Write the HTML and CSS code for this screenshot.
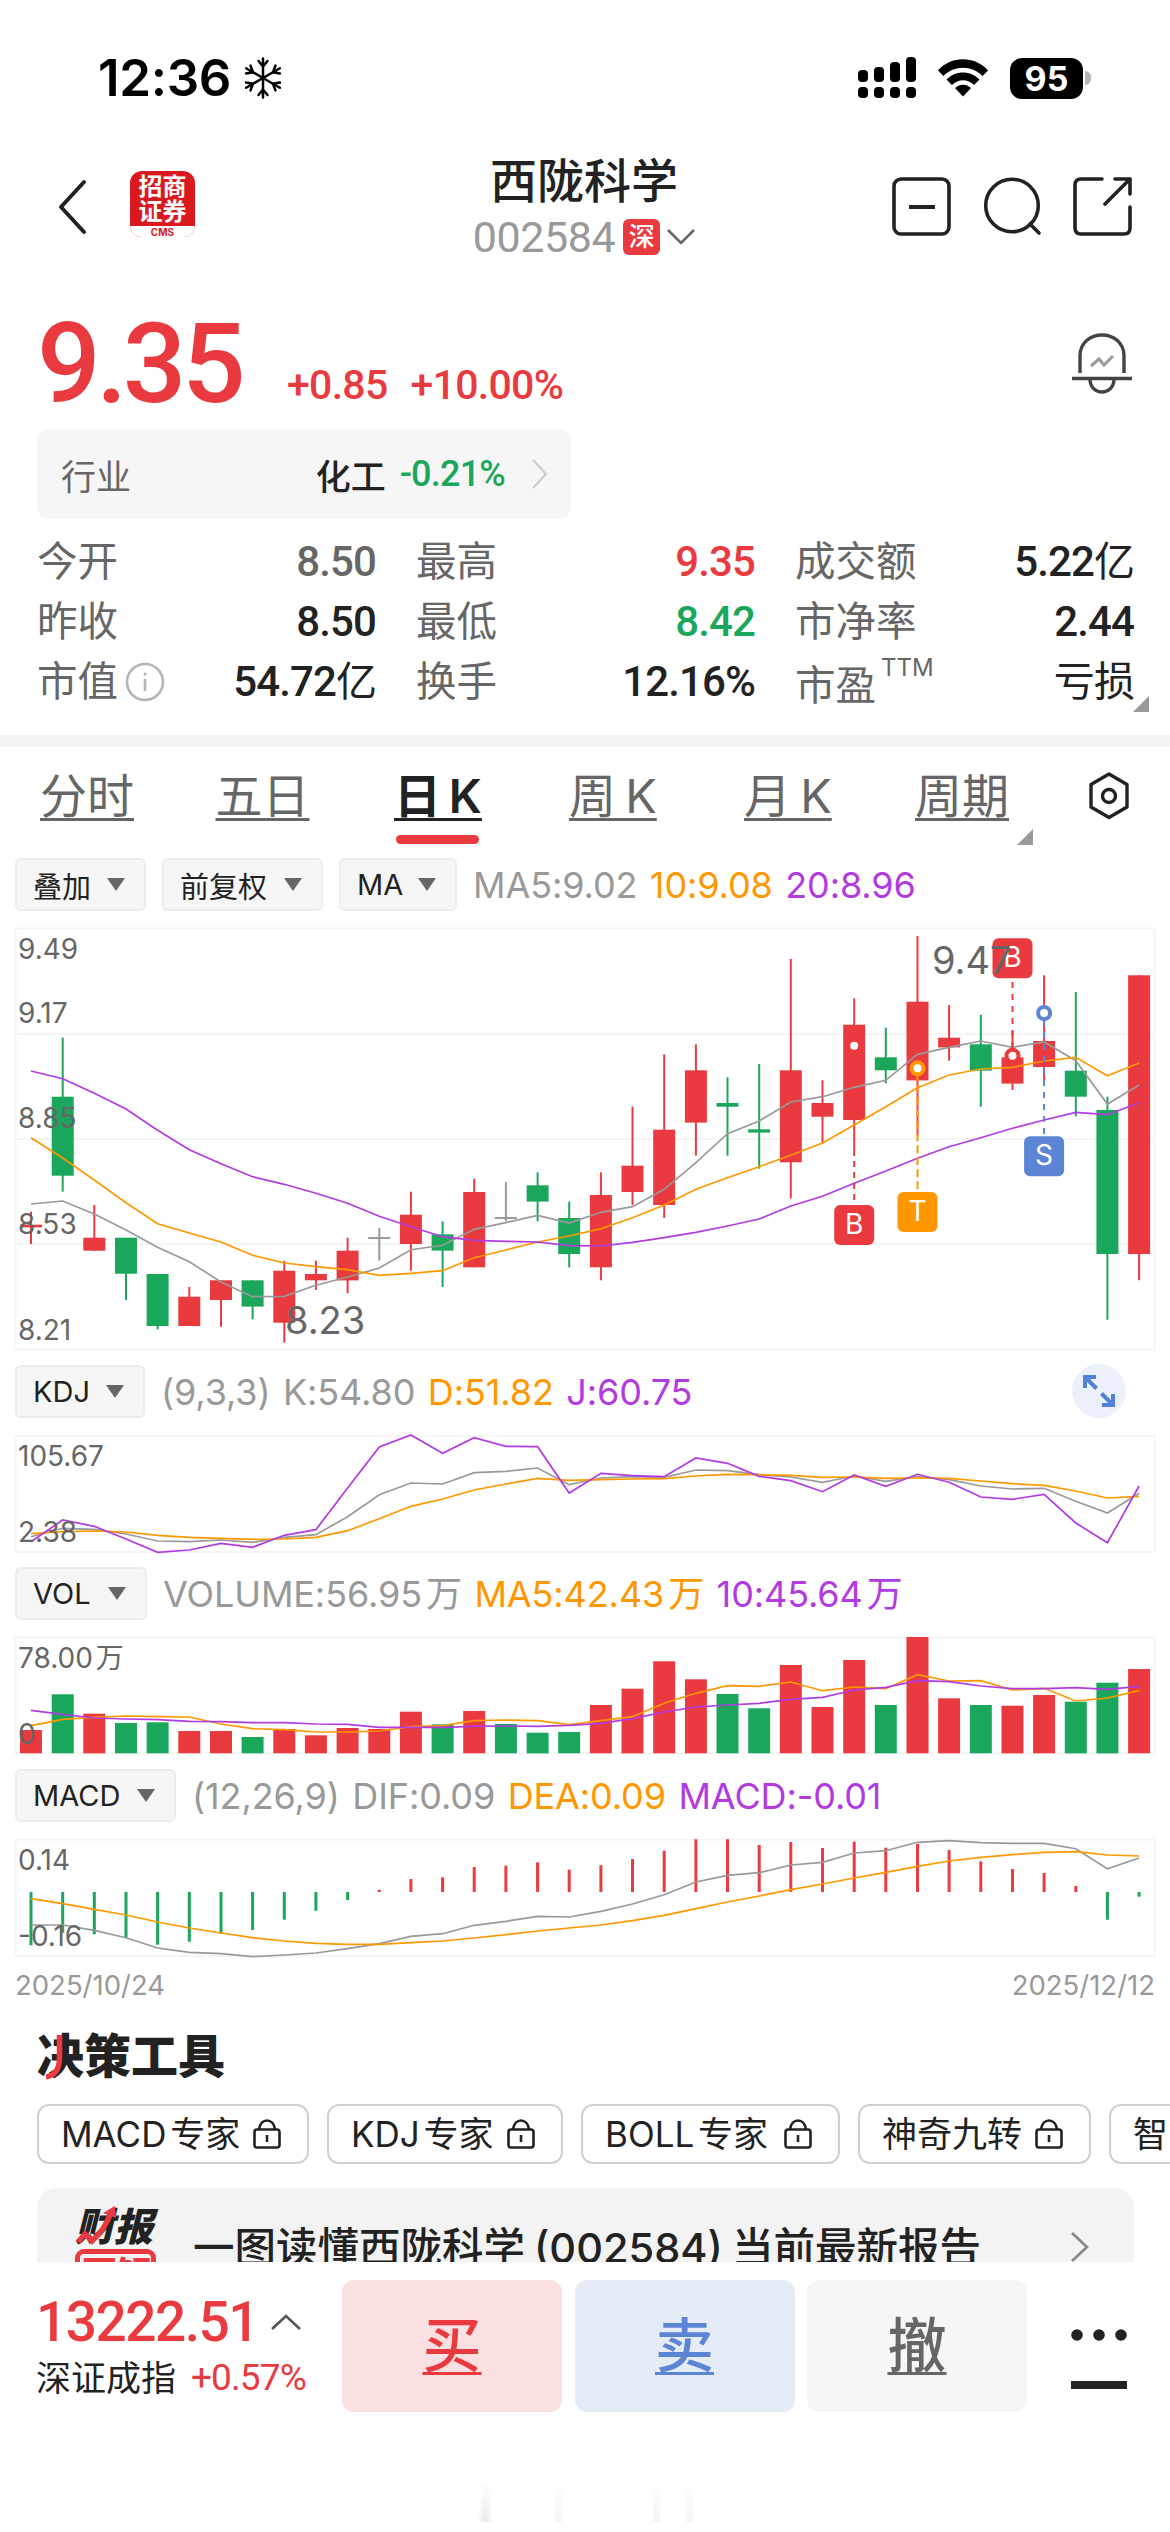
FILE: index.html
```html
<!DOCTYPE html>
<html lang="zh-CN">
<head>
<meta charset="utf-8">
<title>西陇科学 002584</title>
<link rel="stylesheet" href="styles.css">
</head>
<body>
<div class="status">
  <div class="status-left"><span class="clock">12:36</span>
    <svg class="snow" width="38" height="42" viewBox="-19 -21 38 42" fill="none" stroke="#000" stroke-width="2.5" stroke-linecap="round"><g id="arm"><path d="M0 0V-19.5M-4.500 -17L0 -11.500L4.500 -17"/></g><use href="#arm" transform="rotate(60)"/><use href="#arm" transform="rotate(120)"/><use href="#arm" transform="rotate(180)"/><use href="#arm" transform="rotate(240)"/><use href="#arm" transform="rotate(300)"/></svg>
  </div>
  <div class="status-right">
    <svg width="58" height="42" viewBox="0 0 58 42"><rect x="0" y="13" width="10" height="12" rx="4"/><rect x="16" y="10" width="10" height="15" rx="4"/><rect x="32" y="5" width="10" height="20" rx="4"/><rect x="48" y="0" width="10" height="25" rx="4"/><rect x="0" y="30" width="10" height="11" rx="4"/><rect x="16" y="30" width="10" height="11" rx="4"/><rect x="32" y="30" width="10" height="11" rx="4"/><rect x="48" y="30" width="10" height="11" rx="4"/></svg>
    <svg width="50" height="38" viewBox="0 0 50 38"><path d="M0 11.500C13-3.500 37-3.500 50 11.500L44.500 17C34 6 16 6 5.500 17Z"/><path d="M8.500 20.500C17.500 11 32.500 11 41.500 20.500L36 26C30 19.500 20 19.500 14 26Z"/><path d="M17 29C21.500 24.500 28.500 24.500 33 29L25 37.500Z"/></svg>
    <div class="battery"><span class="battery-level">95</span><i class="battery-tip"></i></div>
  </div>
</div>

<header class="header">
  <svg class="back" width="30" height="56" viewBox="0 0 30 56" fill="none" stroke="#222" stroke-width="4" stroke-linecap="round" stroke-linejoin="round"><path d="M26 3L3 28L26 53"/></svg>
  <div class="broker"><span>招商</span><span>证券</span><em>CMS</em></div>
  <div class="stock">
    <h1>西陇科学</h1>
    <div class="stock-code"><span class="din">002584</span><b>深</b><svg width="28" height="16" viewBox="0 0 28 16" fill="none" stroke="#666" stroke-width="2.6"><path d="M1 1L14 14L27 1"/></svg></div>
  </div>
  <div class="actions">
    <svg width="60" height="60" viewBox="0 0 60 60" fill="none" stroke="#222" stroke-width="3.6"><rect x="2" y="2" width="55" height="55" rx="7"/><path d="M17 30H43" stroke-width="4"/></svg>
    <svg width="60" height="60" viewBox="0 0 60 60" fill="none" stroke="#222" stroke-width="3.600" stroke-linecap="round"><circle cx="29" cy="28.500" r="26.300"/><path d="M47 47L56 56"/></svg>
    <svg width="60" height="60" viewBox="0 0 60 60" fill="none" stroke="#222" stroke-width="3.600" stroke-linecap="round" stroke-linejoin="round"><path d="M29 2H8Q2 2 2 8V51Q2 57 8 57H51Q57 57 57 51V30M42 2H57V17M57 2L32 27"/></svg>
  </div>
</header>

<section class="quote">
  <div class="price-row">
    <span class="price din">9.35</span><span class="change din">+0.85</span><span class="change din">+10.00%</span>
    <svg class="bell" width="60" height="62" viewBox="0 0 60 62" fill="none" stroke="#444" stroke-width="3.400"><path d="M8 40V23C8-5 52-5 52 23V40"/><path d="M0 45.500H60M18 47C19 63 41 63 42 47"/><path d="M19 33L27 26L32 32L41 23" stroke="#999" stroke-width="3"/></svg>
  </div>
  <div class="industry"><span class="industry-label">行业</span><span class="industry-name">化工</span><span class="industry-chg din">-0.21%</span><svg width="16" height="30" viewBox="0 0 16 30" fill="none" stroke="#ccc" stroke-width="2"><path d="M1 1L14 15L1 29"/></svg></div>
  <dl class="stats">
    <div><dt>今开</dt><dd class="din flat">8.50</dd></div>
    <div><dt>最高</dt><dd class="din up">9.35</dd></div>
    <div><dt>成交额</dt><dd class="din">5.22<span>亿</span></dd></div>
    <div><dt>昨收</dt><dd class="din">8.50</dd></div>
    <div><dt>最低</dt><dd class="din down">8.42</dd></div>
    <div><dt>市净率</dt><dd class="din">2.44</dd></div>
    <div><dt>市值<svg width="40" height="40" viewBox="0 0 40 40" fill="none" stroke="#b5b5b5" stroke-width="2.600"><circle cx="20" cy="20" r="18"/><path d="M20 17V29M20 10.500V13.500"/></svg></dt><dd class="din">54.72<span>亿</span></dd></div>
    <div><dt>换手</dt><dd class="din">12.16%</dd></div>
    <div><dt class="pe">市盈<sup>TTM</sup></dt><dd class="din"><span>亏损</span></dd></div>
  </dl>
  <i class="corner stats-corner"></i>
</section>

<nav class="tabs">
  <a>分时</a><a>五日</a><a class="active">日 K</a><a>周 K</a><a>月 K</a><a>周期<i class="corner"></i></a>
  <svg width="42" height="48" viewBox="0 0 42 48" fill="none" stroke="#222" stroke-width="3.400" stroke-linejoin="round"><path d="M21 2L39 12.500V35L21 45.500L3 35V12.500Z"/><circle cx="21" cy="24" r="6.500"/></svg>
</nav>

<div class="toolbar tb-main"><button class="w131">叠加<i></i></button><button class="w161">前复权<i></i></button><button class="w118">MA<i></i></button>
  <div class="values v-ma"><span>MA5:9.02</span><span class="o">10:9.08</span><span class="p">20:8.96</span></div></div>
<svg class="chart" id="k" width="1170" height="440" viewBox="0 0 1170 440"></svg>

<div class="toolbar tb-kdj"><button class="w130">KDJ<i></i></button>
  <div class="values v-kdj"><span>(9,3,3)</span><span>K:54.80</span><span class="o">D:51.82</span><span class="p">J:60.75</span></div>
  <div class="expand"><svg width="32" height="32" viewBox="0 0 32 32" fill="none" stroke="#5480d8" stroke-width="4"><path d="M2 13V2H13M2.500 2.500L13.500 13.500M30 19V30H19M29.500 29.500L18.500 18.500"/></svg></div></div>
<svg class="chart" id="kdj" width="1170" height="130" viewBox="0 80 1170 130"></svg>

<div class="toolbar tb-vol"><button class="w132">VOL<i></i></button>
  <div class="values v-vol"><span>VOLUME:56.95 万</span><span class="o">MA5:42.43 万</span><span class="p">10:45.64 万</span></div></div>
<svg class="chart" id="vol" width="1170" height="130" viewBox="0 280 1170 130"></svg>

<div class="toolbar tb-macd"><button class="w161">MACD<i></i></button>
  <div class="values v-macd"><span>(12,26,9)</span><span>DIF:0.09</span><span class="o">DEA:0.09</span><span class="p">MACD:-0.01</span></div></div>
<svg class="chart" id="macd" width="1170" height="130" viewBox="0 70 1170 130"></svg>
<div class="dates"><span>2025/10/24</span><span>2025/12/12</span></div>

<section class="tools">
  <h2><span class="jue">决<svg width="18" height="46" viewBox="0 0 18 46" fill="none" stroke="#e93a3f" stroke-width="5.500"><path d="M13.500 0V22C13.500 34 10 40 0 42"/></svg></span>策工具</h2>
  <div class="chips">
    <span class="c1">MACD 专家<svg><use href="#lock"/></svg></span><span class="c2">KDJ 专家<svg><use href="#lock"/></svg></span><span class="c3">BOLL 专家<svg><use href="#lock"/></svg></span><span class="c4">神奇九转<svg><use href="#lock"/></svg></span><span class="c5">智能</span>
  </div>
  <div class="report">
    <div class="report-logo"><b>财报</b><em>图解</em><svg width="44" height="40" viewBox="0 0 44 40" fill="none" stroke="#e93a3f" stroke-width="5.500"><path d="M3 36L10 28L17 35C25 28 32 18 36 6"/><path d="M28 7L40 0L41 12Z" fill="#e93a3f" stroke="none"/></svg></div>
    <p>一图读懂西陇科学 (002584) 当前最新报告</p>
    <svg class="go" width="18" height="30" viewBox="0 0 18 30" fill="none" stroke="#888" stroke-width="2.600"><path d="M1 1L16 15L1 29"/></svg>
  </div>
</section>

<footer class="trade">
  <div class="trade-row">
    <div class="index">
      <div class="index-value"><span class="din">13222.51</span><svg width="30" height="16" viewBox="0 0 30 16" fill="none" stroke="#555" stroke-width="2.600"><path d="M1 15L15 2L29 15"/></svg></div>
      <div class="index-name">深证成指<span class="din">+0.57%</span></div>
    </div>
    <a class="buy">买</a><a class="sell">卖</a><a class="cancel">撤</a>
    <div class="more"><svg width="56" height="14" viewBox="0 0 56 14" fill="#222"><circle cx="6" cy="7" r="5.800"/><circle cx="28" cy="7" r="5.800"/><circle cx="50" cy="7" r="5.800"/></svg><i></i></div>
  </div>
  <div class="ghost"><i></i><i></i><i></i><i></i></div>
</footer>
<svg class="defs" width="0" height="0"><symbol id="lock" viewBox="0 0 28 30"><path d="M4 10.500H24Q26.500 10.500 26.500 13V26Q26.500 28.500 24 28.500H4Q1.500 28.500 1.500 26V13Q1.500 10.500 4 10.500ZM6 10.500C7.500-1.500 20.500-1.500 22 10.500M14 16V23" fill="none" stroke="#222" stroke-width="2.600"/></symbol></svg>
<script src="script.js"></script>
</body>
</html>
```
FILE: styles.css
```css
* { box-sizing: border-box; }
body { margin: 0; width: 1170px; height: 2532px; overflow: hidden; background: #fff; color: #222; font-family: Inter, "Noto Sans CJK SC", sans-serif; }
svg { display: block; flex: none; }
h1, h2, p, dl, dd { margin: 0; }
em, i { font-style: normal; }
.din { font-family: Roboto, "Noto Sans CJK SC", sans-serif; font-weight: 500; }
.up { color: #e93a3f; }
.down { color: #1aa75c; }
.defs { position: absolute; }

.status { height: 155px; padding: 57px 79px 0 98px; display: flex; justify-content: space-between; color: #000; }
.status-left { display: flex; height: 42px; align-items: center; gap: 13px; }
.clock { font-size: 51px; font-weight: 600; line-height: 42px; letter-spacing: -.3px; width: 133px; white-space: nowrap; }
.status-right { display: flex; height: 42px; align-items: center; gap: 22px; }
.battery { display: flex; align-items: center; gap: 2px; }
.battery-level { width: 73px; height: 41px; border-radius: 12px; background: #000; color: #fff; font-size: 34px; font-weight: 700; line-height: 41px; text-align: center; }
.battery-tip { width: 6px; height: 14px; border-radius: 0 6px 6px 0; background: #b5b5b5; }

.header { height: 145px; padding: 0 37px 0 58px; display: grid; grid-template-columns: 72px 300px 1fr 241px; align-items: start; }
.back { margin-top: 24px; }
.broker { width: 65px; height: 66px; margin-top: 16px; border-radius: 12px; background: #d9191f; color: #fff; overflow: hidden; display: flex; flex-direction: column; align-items: center; font-weight: 700; font-size: 24px; line-height: 25px; padding-top: 3px; }
.broker em { width: 100%; margin-top: 2px; background: #fff; color: #d9191f; font-size: 10px; line-height: 12px; text-align: center; }
.stock { display: flex; flex-direction: column; align-items: center; width: 308px; }
.stock h1 { font-size: 47px; font-weight: 500; line-height: 52px; }
.stock-code { display: flex; align-items: center; height: 60px; color: #999; }
.stock-code span { font-size: 43px; font-weight: 400; letter-spacing: -.4px; }
.stock-code b { width: 37px; height: 36px; margin: 0 7px 0 8px; border-radius: 6px; background: #e93a3f; color: #fff; font-size: 26px; font-weight: 500; line-height: 35px; text-align: center; }
.actions { display: flex; gap: 30.5px; margin: 22px 0 0; }

.quote { position: relative; height: 447px; border-bottom: 12px solid #f3f3f3; padding: 0 37px; }
.price-row { display: flex; height: 129px; color: #e93a3f; align-items: baseline; line-height: 129px; white-space: nowrap; }
.price { font-size: 112px; letter-spacing: -4.5px; width: 250px; line-height: 122px; transform: translateY(3px); }
.change { font-size: 41px; letter-spacing: -.7px; margin-right: 23px; }
.bell { margin-left: auto; align-self: flex-start; margin-top: 33px; margin-right: 1px; }
.industry { width: 534px; height: 90px; border-radius: 12px; background: #f6f6f6; padding: 0 23px 0 24px; display: flex; align-items: center; font-size: 35px; color: #666; }
.industry-name { margin-left: auto; color: #222; font-weight: 500; }
.industry-chg { color: #1aa75c; margin: 0 27px 0 14px; font-size: 36px; letter-spacing: -.8px; }
.stats { margin-top: 13px; display: grid; grid-template-columns: 338px 338px 338px; column-gap: 41px; grid-auto-rows: 60px; }
.stats div { display: flex; justify-content: space-between; align-items: center; white-space: nowrap; }
.stats dt { font-size: 40.5px; color: #666; display: flex; align-items: center; gap: 7px; line-height: 60px; }
.stats dd { font-size: 42px; letter-spacing: -.9px; line-height: 60px; margin-right: -1px; }
.stats dd span { font-size: 41px; font-weight: 400; }
.stats .flat { color: #666; }
.stats .pe { padding-top: 8px; gap: 5px; }
.stats sup { font-size: 24px; line-height: 24px; align-self: flex-start; margin-top: 0; }
.corner { width: 16px; height: 16px; background: #999; clip-path: polygon(100% 0, 100% 100%, 0 100%); }
.stats-corner { position: absolute; left: 1133px; top: 396px; }

.tabs { height: 103px; padding: 0 39px 0 40px; display: grid; grid-template-columns: 175.500px 178.500px 175px 175px 171px 173px 42px; align-items: start; font-size: 47px; color: #666; }
.tabs a { position: relative; justify-self: start; margin-top: 19px; line-height: 60px; text-decoration: underline; text-decoration-thickness: 3px; text-underline-offset: 5px; white-space: nowrap; word-spacing: -4px; }
.tabs .active { color: #222; font-weight: 600; }
.tabs .active::after { content: ""; position: absolute; left: 2px; bottom: -18px; width: 83px; height: 9px; border-radius: 5px; background: #e93a3f; }
.tabs .corner { position: absolute; left: 102px; top: 63px; }
.tabs svg { margin-top: 25px; }

.toolbar { height: 70px; padding-left: 15px; display: flex; align-items: flex-start; }
.tb-main { padding-top: 8px; }
.tb-kdj { padding-top: 5px; }
.tb-vol { padding-top: 7px; }
.tb-macd { padding-top: 9px; }
.toolbar button { height: 53px; padding: 0 19px 0 16px; margin-right: 16px; border: 2px solid #ececec; border-radius: 6px; background: #f6f6f6; display: flex; align-items: center; justify-content: space-between; font: 400 29px Inter, "Noto Sans CJK SC", sans-serif; color: #222; white-space: nowrap; }
.toolbar button i { width: 18px; height: 13px; background: #666; clip-path: polygon(0 0, 100% 0, 50% 100%); }
.w131 { width: 131px; }
.w161 { width: 161px; }
.w118 { width: 118px; }
.w130 { width: 130px; }
.w132 { width: 132px; }
.values { display: flex; font-size: 36px; line-height: 54px; color: #999; white-space: nowrap; gap: 12.5px; font-weight: 400; letter-spacing: -.1px; word-spacing: -6px; }
.values .o { color: #ff9800; }
.values .p { color: #b13be0; }
.expand { margin: -1px 44px 0 auto; width: 54px; height: 54px; border-radius: 50%; background: #ebf0fa; display: grid; place-items: center; }
.chart { font-family: Inter, "Noto Sans CJK SC", sans-serif; }
.dates { height: 50px; padding: 9px 15px 0; display: flex; justify-content: space-between; font-size: 27.5px; line-height: 33px; color: #999; }

.tools { height: 252px; padding-left: 37px; overflow: hidden; }
.tools h2 { font-size: 47px; font-weight: 900; line-height: 54px; padding-top: 19px; height: 94px; display: flex; }
.jue { position: relative; display: block; height: 54px; }
.jue svg { position: absolute; left: 9px; top: 6px; }
.chips { display: flex; gap: 18px; width: 1300px; }
.chips span { height: 60px; border: 2px solid #d0d0d0; border-radius: 12px; display: flex; align-items: center; justify-content: space-between; padding: 0 26px 0 22px; font-size: 35px; line-height: 56px; white-space: nowrap; word-spacing: -6px; }
.chips svg { width: 28px; height: 30px; }
.chips .c1 { width: 272px; }
.chips .c2 { width: 236px; }
.chips .c3 { width: 259px; }
.chips .c4 { width: 233px; }
.chips .c5 { width: 150px; }
.report { width: 1097px; height: 122px; margin-top: 24px; border-radius: 20px; background: #f3f3f3; display: flex; align-items: flex-start; padding: 0 45px 0 38px; }
.report-logo { position: relative; width: 118px; padding-top: 17px; font-style: italic; }
.report-logo b { display: block; font-size: 39px; line-height: 43px; font-weight: 900; }
.report-logo em { display: block; width: 81px; height: 50px; margin-top: 1px; border: 5px solid #e93a3f; border-radius: 9px; color: #e93a3f; font-size: 36px; font-style: normal; line-height: 42px; font-weight: 900; text-align: center; letter-spacing: -2px; }
.report-logo svg { position: absolute; left: 0; top: 18px; }
.report p { font-size: 41.5px; font-weight: 500; line-height: 60px; margin-top: 30px; white-space: nowrap; word-spacing: -2px; }
.go { margin: 44px 0 0 auto; }

.trade { height: 270px; background: #fff; }
.trade-row { display: flex; padding: 18px 43px 0 37px; height: 218px; }
.index { width: 305px; padding-top: 11px; white-space: nowrap; margin-left: -1px; margin-right: 1px; }
.index-value { display: flex; align-items: center; height: 62px; gap: 13px; color: #e93a3f; font-size: 55px; letter-spacing: -1.500px; }
.index-name { font-size: 35px; line-height: 50px; display: flex; align-items: center; gap: 15px; margin-top: 0; }
.index-name span { color: #e93a3f; font-size: 37px; letter-spacing: -.9px; font-weight: 400; }
.trade-row a { width: 220px; height: 132px; border-radius: 12px; margin-right: 12.500px; text-align: center; font-size: 59px; font-weight: 500; line-height: 132px; text-decoration: underline; text-decoration-thickness: 3px; text-underline-offset: 5px; }
.buy { background: #fbe0e1; color: #e93a3f; }
.sell { background: #e5ebf7; color: #5c85d6; }
.cancel { background: #f6f6f6; color: #666; }
.more { margin-left: auto; padding-top: 48px; }
.more i { display: block; width: 56px; height: 8px; margin-top: 39px; background: #222; }
.ghost { display: flex; height: 42px; padding-left: 478px; }
.ghost i { width: 7px; margin-right: 26px; background: linear-gradient(#fff, #f5f5f5); }
.ghost i:first-child { width: 15px; margin-right: 62px; background: linear-gradient(90deg, #fff, #e8e8e8, #fff); -webkit-mask-image: linear-gradient(transparent, #000); }
.ghost i:nth-child(2) { margin-right: 91px; }
```
FILE: script.js
```js
const RED = '#e93a3f', GREEN = '#1aa75c', GRAY = '#999', ORANGE = '#ff9800', PURPLE = '#b13be0', BLUE = '#5c85d6';
const x = i => 31 + i * 31.66;

// Vertical values are stored in thirds of a pixel.
const y = v => v / 3;
const n = v => Number(v).toFixed(1);
const line = (a, color) => `<polyline fill="none" stroke="${color}" stroke-width="1.7" points="${a.map((v, i) => n(x(i)) + ',' + n(y(v))).join(' ')}"/>`;
const stem = (i, a, b, color, w = 2, dash = '') => `<line x1="${n(x(i))}" x2="${n(x(i))}" y1="${n(y(a))}" y2="${n(y(b))}" stroke="${color}" stroke-width="${w}" ${dash && `stroke-dasharray="${dash}"`}/>`;
const rect = (i, a, b, color) => `<rect x="${n(x(i) - 11)}" y="${n(y(a))}" width="22" height="${n(Math.max(y(b - a), 2))}" fill="${color}"/>`;
const label = (px, py, t, size = 28) => `<text x="${px}" y="${py}" font-size="${size}" word-spacing="-5" fill="#666">${t}</text>`;
const frame = (top, bottom) => `<rect x="15.500" y="${top}" width="1139" height="${bottom - top}" fill="none" stroke="#f5f5f5" stroke-width="2"/>`;
const draw = (id, s) => { document.getElementById(id).innerHTML = s; };
const nums = s => s.split(' ').map(Number);

// color, high, body top, body bottom, low
const candles = [
  ['r',875,914,922,972],['g',353,530,767,815],['r',855,953,992,992],['g',953,953,1061,1140],['g',1062,1062,1218,1228],['r',1101,1130,1218,1218],
  ['r',1081,1081,1140,1220],['g',1081,1081,1160,1198],['r',1022,1052,1208,1268],['r',1022,1062,1081,1110],['r',953,992,1081,1120],['x',924,951,956,1022],
  ['r',815,884,972,1052],['g',904,943,992,1101],['r',776,816,1042,1042],['x',786,891,896,904],['g',757,796,845,904],['g',845,894,1002,1042],
  ['r',757,825,1042,1081],['r',560,737,816,855],['r',403,629,855,894],['r',373,451,608,707],['g',472,549,560,707],['g',432,628,638,746],
  ['r',117,451,727,835],['r',481,549,590,668],['r',235,314,600,690],['g',323,412,451,490],['r',48,245,481,648],['r',255,353,382,422],
  ['g',284,373,452,560],['r',333,412,491,510],['r',166,363,441,481],['g',216,452,530,589],['g',530,570,1002,1199],['r',166,166,1002,1081]
];
const tone = { r: RED, g: GREEN, x: GRAY };
const tag = (i, top, t, color) => `<rect x="${n(x(i) - 20)}" y="${n(y(top))}" width="40" height="40" rx="6" fill="${color}"/><text x="${n(x(i))}" y="${n(y(top) + 29)}" text-anchor="middle" font-size="28" fill="#fff">${t}</text>`;
const ring = (i, v, color) => `<circle cx="${n(x(i))}" cy="${n(y(v))}" r="6" fill="#fff" stroke="${color}" stroke-width="4"/>`;
draw('k',
  frame(8.5, 429.5) +
  [114, 219, 324].map(v => `<path d="M15 ${v}H1155" stroke="#f5f5f5" stroke-width="2"/>`).join('') +
  candles.map(([c, h, a, b, l], i) => stem(i, h, l, tone[c]) + rect(i, a, b, tone[c])).join('') +
  line(nums('852 843 882 930 982 1025 1086 1130 1129 1096 1071 1044 989 976 928 908 886 909 877 860 808 728 641 603 546 530 502 481 403 382 363 382 366 422 552 495'), GRAY) +
  line(nums('653 714 780 848 911 939 966 1006 1029 1040 1049 1066 1060 1052 1013 990 966 948 926 893 855 808 773 740 706 669 615 560 503 465 447 442 423 412 467 429'), ORANGE) +
  line(nums('453 476 520 567 631 689 731 770 793 820 850 889 920 950 961 964 966 977 978 967 953 937 918 897 858 829 790 753 715 680 653 625 600 577 584 548'), PURPLE) +
  stem(26, 690, 855, RED, 2, '6 5') + tag(26, 855, 'B', RED) + `<circle cx="${n(x(26))}" cy="125.700" r="4" fill="#fff"/>` +
  stem(28, 460, 816, ORANGE, 2, '8 4') + ring(28, 445, ORANGE) + tag(28, 816, 'T', ORANGE) +
  stem(31, 186, 400, RED, 2, '6 6') + ring(31, 407, RED) + tag(31, 55, 'B', RED) +
  stem(32, 300, 645, BLUE, 2, '6 6') + ring(32, 279, BLUE) + tag(32, 649, 'S', BLUE) +
  label(18, 39, '9.49') + label(18, 103, '9.17') + label(18, 208, '8.85') + label(18, 314, '8.53') + label(18, 420, '8.21') +
  label(285, 414, '8.23', 38) + label(932, 54, '9.47', 38)
);

draw('kdj',
  frame(85.7, 202) +
  line(nums('560 535 538 552 573 575 570 577 562 554 500 434 399 402 368 364 354 404 384 380 382 360 362 374 381 397 378 394 380 389 408 417 415 454 489 430'), GRAY) +
  line(nums('551 545 543 546 556 562 565 568 567 562 542 506 469 447 420 402 385 391 389 387 386 378 373 374 376 382 381 385 384 385 393 401 406 423 444 439'), ORANGE) +
  line(nums('575 510 529 567 607 600 580 592 556 539 414 291 255 310 263 289 290 429 370 377 380 324 340 379 392 425 375 409 373 397 441 448 433 519 578 408'), PURPLE) +
  label(18, 116, '105.67') + label(18, 192, '2.38')
);

const volumes = nums('1140 1033 1091 1119 1117 1143 1143 1161 1137 1156 1134 1137 1085 1123 1083 1122 1148 1146 1065 1016 934 988 1032 1075 945 1071 930 1065 861 1045 1065 1067 1035 1055 998 957');
const volTone = 'rgrggrrgrrrrrgrgggrrrrggrrrgrrgrrggr';
draw('vol',
  frame(287.5, 403.5) +
  volumes.map((v, i) => rect(i, v, 1210, tone[volTone[i]])).join('') +
  line(nums('1127 1108 1102 1098 1100 1101 1122 1136 1139 1146 1146 1143 1130 1127 1112 1110 1112 1124 1112 1100 1060 1030 1007 1009 996 1022 1011 1016 974 993 992 1020 1015 1053 1044 1022'), ORANGE) +
  line(nums('1081 1093 1104 1107 1109 1114 1115 1118 1118 1122 1123 1132 1132 1132 1129 1128 1129 1126 1120 1106 1086 1071 1065 1060 1048 1042 1020 1012 992 995 1008 1016 1016 1013 1018 1009'), PURPLE) +
  label(18, 318, '78.00 万') + label(18, 394, '0')
);

const bars = nums('556 518 523 533 554 545 522 510 479 452 420 389 357 352 321 317 307 329 316 297 272 238 238 255 246 264 245 263 252 270 304 327 339 378 479 410');
draw('macd',
  frame(79.5, 196) +
  bars.map((v, i) => stem(i, 396, v, v > 396 ? GREEN : RED, 3)).join('') +
  line(nums('495 495 511 533 564 577 581 590 585 579 566 551 529 521 496 484 469 471 454 432 404 366 346 338 315 307 279 272 247 242 248 250 250 266 326 294'), GRAY) +
  line(nums('416 431 448 465 486 504 519 533 543 550 553 553 548 543 534 524 513 504 495 482 466 446 426 408 389 372 354 337 319 303 292 284 277 275 285 288'), ORANGE) +
  label(18, 110, '0.14') + label(18, 186, '-0.16')
);
```
